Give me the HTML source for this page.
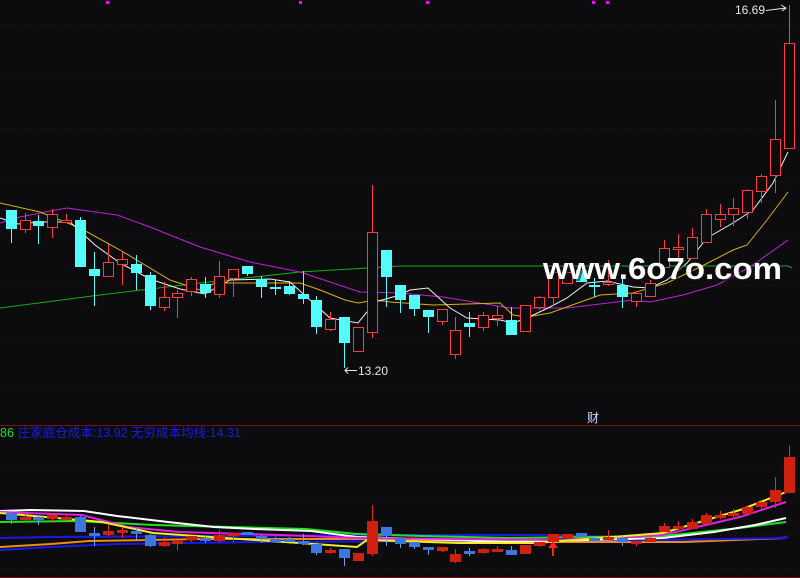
<!DOCTYPE html>
<html><head><meta charset="utf-8"><style>
html,body{margin:0;padding:0;background:#0c0c0f;}
body{width:800px;height:578px;overflow:hidden;position:relative;font-family:"Liberation Sans","Noto Sans CJK SC",sans-serif;}
svg{position:absolute;left:0;top:0;}
</style></head><body>
<svg id="s" width="800" height="578" xmlns="http://www.w3.org/2000/svg"></svg>
<script>
var S=document.getElementById('s');var h='';
// grid
[24,76,128,181,233,285,338,390].forEach(function(y){h+='<line x1="0" y1="'+y+'.5" x2="800" y2="'+y+'.5" stroke="#5a0c0c" stroke-dasharray="1,4"/>';});
[468,502,535,568].forEach(function(y){h+='<line x1="0" y1="'+y+'.5" x2="800" y2="'+y+'.5" stroke="#5a0c0c" stroke-dasharray="1,4"/>';});
h+='<line x1="0" y1="425.5" x2="800" y2="425.5" stroke="#7a1010"/>';
h+='<line x1="0" y1="577.5" x2="800" y2="577.5" stroke="#7a1010"/>';
// candles: [type, o, c, hi, lo] type 1=red 0=cyan
var C=[[0,210,229,210,243],[1,220,229,213,233],[0,221,226,215,244],[1,214,227,209,238],[1,220,222,214,222],[0,220,267,217,267],[0,269,276,252,306],[1,262,276,244,277],[1,259,264,252,285],[0,264,273,255,290],[0,275,306,272,310],[1,297,307,282,311],[1,293,297,290,318],[1,279,291,277,296],[0,284,293,277,298],[1,276,294,261,298],[1,269,278,269,297],[0,266,274,266,276],[0,279,287,276,298],[0,287,289,280,295],[0,286,294,281,295],[0,294,299,271,304],[0,300,327,296,334],[1,319,329,312,331],[0,317,343,317,368],[1,327,351,327,351],[1,232,332,185,338],[0,250,277,250,307],[0,285,300,285,313],[0,295,309,295,316],[0,310,317,310,333],[1,309,321,309,325],[1,330,354,317,359],[0,323,327,312,337],[1,315,327,312,331],[1,315,318,306,326],[0,320,335,307,335],[1,305,331,305,331],[1,297,307,296,310],[1,272,297,272,306],[1,272,283,272,283],[0,270,282,270,282],[0,285,287,278,297],[1,282,284,260,286],[0,285,297,278,308],[1,293,301,293,307],[1,283,296,280,296],[1,248,267,240,267],[1,247,249,234,258],[1,237,258,228,258],[1,214,242,209,242],[1,214,219,204,227],[1,208,214,198,226],[1,190,212,189,219],[1,176,191,174,203],[1,139,175,100,193],[1,43,148,5,148]];
function X(i){return Math.round(789-13.9*(56-i));}
function by(y){return Math.round(443+y*0.335);}
function pl(pts,col,w){return '<polyline fill="none" stroke="'+col+'" stroke-width="'+(w||1)+'" points="'+pts.map(function(p){return p.join(',')}).join(' ')+'"/>';}
// MA lines main
h+=pl([[0,308],[100,295],[200,283],[300,272],[400,266],[788,266],[792,268]],'#1aa81a');
h+=pl([[0,223],[20,217],[40,213],[67,208],[117,215],[150,227],[200,247],[250,262],[300,272],[333,283],[360,292],[400,293],[443,297],[510,308],[567,308],[633,300],[650,302],[683,295],[717,285],[750,267],[767,255],[788,240]],'#c020d8');
h+=pl([[0,203],[40,212],[80,228],[120,250],[170,280],[200,290],[215,283],[260,283],[300,283],[320,290],[345,300],[358,303],[375,300],[390,302],[433,305],[500,303],[513,315],[527,317],[550,313],[600,295],[633,293],[667,283],[700,267],[733,250],[747,245],[767,220],[788,192]],'#d8b010');
h+=pl([[0,218],[18,224],[40,222],[70,222],[95,245],[120,263],[150,279],[180,289],[205,294],[230,280],[270,279],[290,282],[310,300],[330,318],[358,323],[375,302],[400,295],[410,290],[428,288],[450,308],[467,318],[500,320],[513,323],[527,318],[550,307],[567,298],[587,283],[607,281],[633,287],[650,288],[667,280],[687,263],[707,238],[733,223],[753,210],[773,183],[788,152]],'#f0f0f0');
// bottom lines
function bl(a,col,w){return pl(a.map(function(p){return [Math.round(p[0]/1.96),Math.round(p[1]/3+440)]}),col,w);}
h+=bl([[0,330],[100,322],[230,312],[500,305],[900,303],[1500,297],[1545,290]],'#1818e8',2);
h+=bl([[0,322],[100,313],[175,303],[400,298],[700,298],[1080,307],[1340,307],[1540,293]],'#f08c10',2);
h+=bl([[0,295],[100,290],[800,285],[1100,285],[1300,300],[1540,293]],'#1818e8',2);
h+=bl([[0,245],[150,243],[300,255],[450,262],[600,268],[700,283],[830,288],[1000,295],[1300,288],[1450,265],[1540,245]],'#20e020',2);
h+=bl([[0,213],[60,210],[165,212],[230,228],[330,245],[420,262],[500,268],[610,272],[700,290],[830,297],[1000,305],[1150,300],[1300,295],[1400,275],[1480,255],[1540,235]],'#ffffff',2);
h+=bl([[0,215],[160,225],[250,260],[350,275],[550,285],[700,295],[1100,300],[1300,285],[1450,230],[1540,185]],'#e020e0',2);
h+=bl([[0,218],[200,245],[300,280],[700,320],[720,300],[900,310],[1050,310],[1300,280],[1450,210],[1540,155]],'#f0f020',2);
C.forEach(function(c,i){var x=X(i),t=Math.min(c[1],c[2]),b=Math.max(c[1],c[2]);if(b-t<2)b=t+2;
 if(c[0]){h+='<line x1="'+(x+.5)+'" y1="'+c[3]+'" x2="'+(x+.5)+'" y2="'+c[4]+'" stroke="#ff3c3c"/>';h+='<rect x="'+(x-4.5)+'" y="'+(t+.5)+'" width="10" height="'+(b-t)+'" fill="#0c0c0f" stroke="#ff3c3c"/>';}
 else{h+='<line x1="'+(x+.5)+'" y1="'+c[3]+'" x2="'+(x+.5)+'" y2="'+c[4]+'" stroke="#54fcfc"/>';h+='<rect x="'+(x-5)+'" y="'+t+'" width="11" height="'+(b-t)+'" fill="#54fcfc"/>';}
 var col=c[0]?'#d02010':'#3a78e0';var t2=by(t),b2=Math.max(by(b),t2+3);
 h+='<line x1="'+(x+.5)+'" y1="'+by(c[3])+'" x2="'+(x+.5)+'" y2="'+by(c[4])+'" stroke="'+(c[0]?'#e03020':'#7a9ae8')+'"/>';
 h+='<rect x="'+(x-5)+'" y="'+t2+'" width="11" height="'+(b2-t2)+'" fill="'+col+'"/>';
});
// arrow
h+='<line x1="553" y1="546" x2="553" y2="556" stroke="#ff2020" stroke-width="2"/><polygon points="548,548 553,541 558,548" fill="#ff2020"/>';
// magenta dots
[107,300,427,593,607].forEach(function(x){h+='<rect x="'+(x-1)+'" y="1" width="3" height="3" fill="#ff00ff"/>';});
// labels
h+='<text x="735" y="14" fill="#e8e8e8" font-size="12" font-family="Liberation Sans,sans-serif">16.69</text>';
h+='<path d="M766 10.5 L786 8 M781 5 L786 8 L782 11" stroke="#e8e8e8" fill="none"/>';
h+='<path d="M345 370.5 H357 M348 367.5 L345 370.5 L348 373.5" stroke="#e8e8e8" fill="none"/>';
h+='<text x="358" y="375" fill="#e8e8e8" font-size="12" font-family="Liberation Sans,sans-serif">13.20</text>';
h+='<text x="587" y="422" fill="#c8e0ff" font-size="12" font-family="Noto Sans CJK SC,sans-serif">财</text>';
h+='<text x="0" y="437" font-size="12.5" font-family="Liberation Sans,Noto Sans CJK SC,sans-serif"><tspan fill="#20e020">86</tspan><tspan fill="#1a1af0" dx="4">庄家底仓成本:13.92 无穷成本均线:14.31</tspan></text>';
h+='<text x="544" y="280" fill="#111" font-size="31" font-weight="bold" textLength="239" lengthAdjust="spacingAndGlyphs" font-family="Liberation Sans,sans-serif" opacity=".6" dx="1" dy="1">www.6o7o.com</text>';
h+='<text x="543" y="279" fill="#ffffff" font-size="31" font-weight="bold" textLength="239" lengthAdjust="spacingAndGlyphs" font-family="Liberation Sans,sans-serif">www.6o7o.com</text>';
S.innerHTML=h;
</script>
</body></html>
